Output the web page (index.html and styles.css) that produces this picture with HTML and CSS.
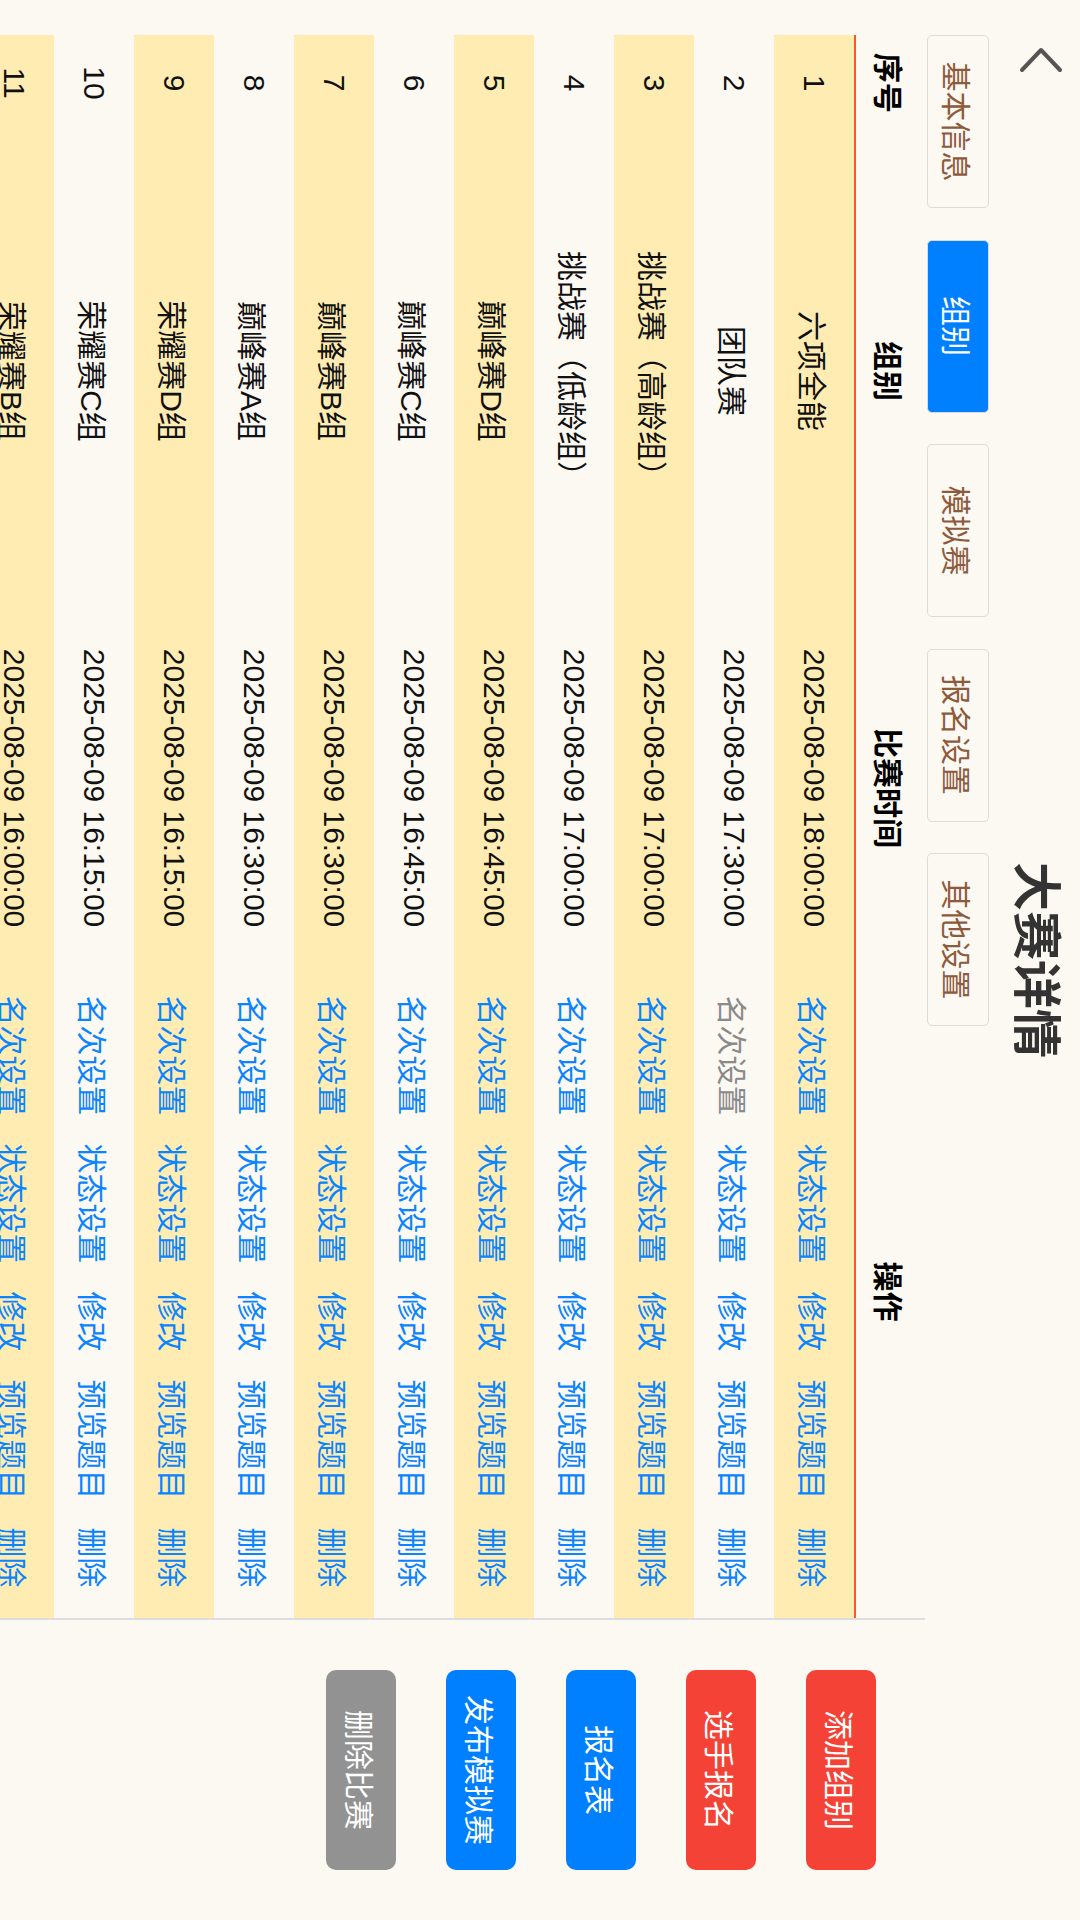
FILE: index.html
```html
<!DOCTYPE html>
<html lang="zh-CN">
<head>
<meta charset="utf-8">
<title>大赛详情</title>
<link rel="stylesheet" href="styles.css">
</head>
<body>
<div class="stage">
  <header class="topbar">
    <div class="back">
      <svg width="32" height="50" viewBox="0 0 32 50"><path d="M26 6 L6 25 L26 44" fill="none" stroke="#555" stroke-width="4" stroke-linecap="round" stroke-linejoin="round"/></svg>
    </div>
    <h1 class="title">大赛详情</h1>
    <div class="spacer"></div>
  </header>
  <nav class="tabs">
    <div class="tab">基本信息</div>
    <div class="tab active">组别</div>
    <div class="tab">模拟赛</div>
    <div class="tab">报名设置</div>
    <div class="tab">其他设置</div>
  </nav>
  <main class="content">
    <section class="table-wrap">
      <div class="row thead">
        <div>序号</div><div>组别</div><div>比赛时间</div><div>操作</div>
      </div>
      <div class="row odd">
        <div>1</div><div>六项全能</div><div>2025-08-09 18:00:00</div>
        <div class="ops"><span class="link">名次设置</span><span class="link">状态设置</span><span class="link">修改</span><span class="link">预览题目</span><span class="link">删除</span></div>
      </div>
      <div class="row">
        <div>2</div><div>团队赛</div><div>2025-08-09 17:30:00</div>
        <div class="ops"><span class="link disabled">名次设置</span><span class="link">状态设置</span><span class="link">修改</span><span class="link">预览题目</span><span class="link">删除</span></div>
      </div>
      <div class="row odd">
        <div>3</div><div>挑战赛（高龄组）</div><div>2025-08-09 17:00:00</div>
        <div class="ops"><span class="link">名次设置</span><span class="link">状态设置</span><span class="link">修改</span><span class="link">预览题目</span><span class="link">删除</span></div>
      </div>
      <div class="row">
        <div>4</div><div>挑战赛（低龄组）</div><div>2025-08-09 17:00:00</div>
        <div class="ops"><span class="link">名次设置</span><span class="link">状态设置</span><span class="link">修改</span><span class="link">预览题目</span><span class="link">删除</span></div>
      </div>
      <div class="row odd">
        <div>5</div><div>巅峰赛D组</div><div>2025-08-09 16:45:00</div>
        <div class="ops"><span class="link">名次设置</span><span class="link">状态设置</span><span class="link">修改</span><span class="link">预览题目</span><span class="link">删除</span></div>
      </div>
      <div class="row">
        <div>6</div><div>巅峰赛C组</div><div>2025-08-09 16:45:00</div>
        <div class="ops"><span class="link">名次设置</span><span class="link">状态设置</span><span class="link">修改</span><span class="link">预览题目</span><span class="link">删除</span></div>
      </div>
      <div class="row odd">
        <div>7</div><div>巅峰赛B组</div><div>2025-08-09 16:30:00</div>
        <div class="ops"><span class="link">名次设置</span><span class="link">状态设置</span><span class="link">修改</span><span class="link">预览题目</span><span class="link">删除</span></div>
      </div>
      <div class="row">
        <div>8</div><div>巅峰赛A组</div><div>2025-08-09 16:30:00</div>
        <div class="ops"><span class="link">名次设置</span><span class="link">状态设置</span><span class="link">修改</span><span class="link">预览题目</span><span class="link">删除</span></div>
      </div>
      <div class="row odd">
        <div>9</div><div>荣耀赛D组</div><div>2025-08-09 16:15:00</div>
        <div class="ops"><span class="link">名次设置</span><span class="link">状态设置</span><span class="link">修改</span><span class="link">预览题目</span><span class="link">删除</span></div>
      </div>
      <div class="row">
        <div>10</div><div>荣耀赛C组</div><div>2025-08-09 16:15:00</div>
        <div class="ops"><span class="link">名次设置</span><span class="link">状态设置</span><span class="link">修改</span><span class="link">预览题目</span><span class="link">删除</span></div>
      </div>
      <div class="row odd">
        <div>11</div><div>荣耀赛B组</div><div>2025-08-09 16:00:00</div>
        <div class="ops"><span class="link">名次设置</span><span class="link">状态设置</span><span class="link">修改</span><span class="link">预览题目</span><span class="link">删除</span></div>
      </div>
      <div class="row">
        <div>12</div><div>荣耀赛A组</div><div>2025-08-09 16:00:00</div>
        <div class="ops"><span class="link">名次设置</span><span class="link">状态设置</span><span class="link">修改</span><span class="link">预览题目</span><span class="link">删除</span></div>
      </div>
    </section>
    <aside class="side">
      <div class="btn red">添加组别</div>
      <div class="btn red">选手报名</div>
      <div class="btn blue">报名表</div>
      <div class="btn blue">发布模拟赛</div>
      <div class="btn gray">删除比赛</div>
    </aside>
  </main>
</div>
</body>
</html>
```

FILE: styles.css
```css
html, body {
  margin: 0;
  padding: 0;
  width: 1080px;
  height: 1920px;
  overflow: hidden;
  background: #fcf8f2;
}

.stage {
  width: 1920px;
  height: 1080px;
  transform-origin: 0 0;
  transform: translateX(1080px) rotate(90deg);
  background: #fcf8f2;
  font-family: "Liberation Sans", "Noto Sans CJK SC", sans-serif;
  display: flex;
  flex-direction: column;
  overflow: hidden;
}

.topbar {
  height: 89px;
  flex: none;
  display: grid;
  grid-template-columns: 1fr auto 1fr;
  align-items: center;
}

.back {
  align-self: start;
  padding: 14px 0 0 44px;
  line-height: 0;
}

.title {
  margin: 0;
  font-size: 49px;
  line-height: 1;
  font-weight: bold;
  color: #333;
}

.tabs {
  flex: none;
  margin-top: 2px;
  height: 62px;
  padding-left: 35px;
  display: flex;
  gap: 31.5px;
}

.tab {
  width: 173px;
  height: 62px;
  box-sizing: border-box;
  border: 1px solid #dcdcdc;
  border-radius: 5px;
  display: flex;
  align-items: center;
  justify-content: center;
  font-size: 30px;
  color: #8d5b3c;
}

.tab.active {
  background: #0080ff;
  color: #fff;
}

.content {
  flex: 1;
  margin-top: 2px;
  display: flex;
  min-height: 0;
}

.table-wrap {
  margin-left: 35px;
  width: 1583px;
  border-right: 2px solid #dddddd;
  overflow: hidden;
}

.row {
  display: grid;
  grid-template-columns: 96px 480px 354px 1fr;
  height: 80px;
  align-items: center;
  justify-items: center;
  font-size: 30px;
  color: #111;
  white-space: nowrap;
}

.row.odd {
  background: #ffecb3;
}

.row.thead {
  height: 69px;
  border-bottom: 2px solid #ff5722;
  font-weight: bold;
  color: #000;
}

.ops {
  display: flex;
  gap: 28px;
}

.link {
  color: #0a84ff;
}

.link.disabled {
  color: #8a8a8a;
}

.side {
  flex: 1;
  display: flex;
  flex-direction: column;
  align-items: center;
  padding-top: 49px;
  gap: 50px;
}

.btn {
  width: 200px;
  height: 70px;
  border-radius: 10px;
  display: flex;
  align-items: center;
  justify-content: center;
  color: #fff;
  font-size: 30px;
}

.btn.red {
  background: #f44336;
}

.btn.blue {
  background: #0080ff;
}

.btn.gray {
  background: #929292;
}
```
